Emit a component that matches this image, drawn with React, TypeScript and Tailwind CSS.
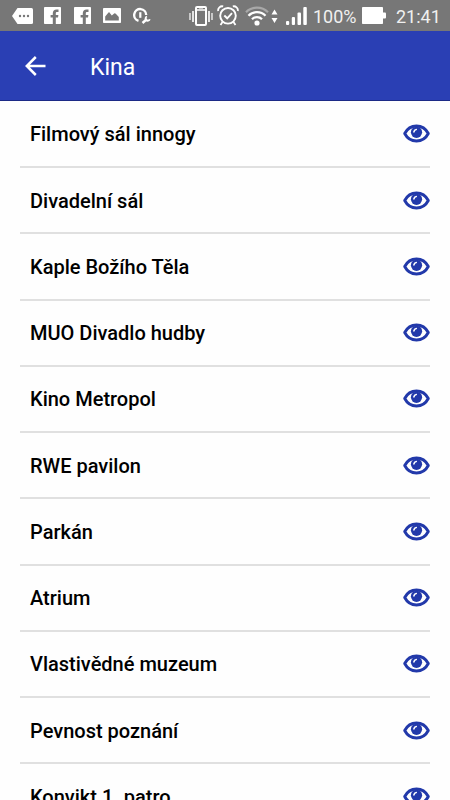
import React from "react";

const cinemas = [
  "Filmový sál innogy",
  "Divadelní sál",
  "Kaple Božího Těla",
  "MUO Divadlo hudby",
  "Kino Metropol",
  "RWE pavilon",
  "Parkán",
  "Atrium",
  "Vlastivědné muzeum",
  "Pevnost poznání",
  "Konvikt 1. patro",
];

function MessageIcon() {
  return (
    <svg width="21" height="16" viewBox="0 0 21 16" className="ml-3 shrink-0">
      <path d="M5.500 0H19.500a1.500 1.500 0 0 1 1.500 1.500V14.500a1.500 1.500 0 0 1-1.500 1.500H5.500L0 8Z" fill="#fff" />
      <circle cx="8" cy="8" r="1.200" fill="#777" />
      <circle cx="12" cy="8" r="1.200" fill="#777" />
      <circle cx="16" cy="8" r="1.200" fill="#777" />
    </svg>
  );
}

function FacebookIcon() {
  return (
    <svg width="17" height="17" viewBox="0 0 17 17" className="shrink-0">
      <rect width="17" height="17" rx="0.800" fill="#fff" />
      <path d="M8.800 17V10.600H6.600V8H8.800V6.300C8.800 3.800 10.200 2.400 12.600 2.400H14.500V5H13.200C12.200 5 11.800 5.500 11.800 6.300V8H14.400L14 10.600H11.800V17Z" fill="#777" />
    </svg>
  );
}

function PictureIcon() {
  return (
    <svg width="18" height="15" viewBox="0 0 18 15" className="ml-3 shrink-0">
      <rect width="18" height="15" rx="0.800" fill="#fff" />
      <path d="M2.200 12.500V8.500L5.500 4.500Q6.500 4 7 5.200L8.800 7.500L11.200 5.400Q12 5 12.800 5.700L15.800 9V12.500Z" fill="#777" />
    </svg>
  );
}

function GaugeIcon() {
  return (
    <svg width="18" height="18" viewBox="0 0 18 18" fill="none" stroke="#fff" className="ml-3 shrink-0">
      <path d="M5.500 13.800A6 6 0 1 1 13.200 8" strokeWidth="2.400" />
      <path d="M7.300 5.200V10.800" strokeWidth="2.200" />
      <path d="M9.500 16L14 12" strokeWidth="2.400" />
      <path d="M14 9.500A2.200 2.200 0 1 0 16.800 12.300" strokeWidth="1.800" />
    </svg>
  );
}

function VibrateIcon() {
  return (
    <svg width="24" height="20" viewBox="0 0 24 20" fill="none" stroke="#fff" className="shrink-0">
      <rect x="7" y="1" width="10" height="18" rx="1" strokeWidth="2" />
      <path d="M7 4H17M10 1.800H14M4 5V16M20 5V16" strokeWidth="1.600" />
      <path d="M1 7V14M23 7V14" strokeWidth="1.200" />
    </svg>
  );
}

function AlarmIcon() {
  return (
    <svg width="22" height="21" viewBox="0 0 22 21" fill="none" stroke="#fff" className="ml-[4px] shrink-0">
      <circle cx="11" cy="10.800" r="7.800" strokeWidth="1.900" />
      <path d="M7.300 10.500L10.200 13.300L15 8.200" strokeWidth="1.900" />
      <path d="M1.200 6A4 4 0 0 1 6.200 1.400M15.800 1.400A4 4 0 0 1 20.800 6M5.500 17L3.500 20M16.500 17L18.500 20" strokeWidth="1.800" />
    </svg>
  );
}

function WifiIcon() {
  return (
    <svg width="33" height="20" viewBox="0 0 33 20" fill="none" className="ml-[6px] mr-[1px] shrink-0">
      <path d="M1 6.200A15.500 15.500 0 0 1 23 6.200" stroke="#a8a8a8" strokeWidth="2.200" />
      <path d="M3.500 9.700A11.700 11.700 0 0 1 20.500 9.700M7 13.200A7 7 0 0 1 17 13.200" stroke="#fff" strokeWidth="2.300" />
      <circle cx="12" cy="17" r="2.600" fill="#fff" />
      <path d="M26.500 8.500L29.500 3.500L32.500 8.500ZM26.500 12L29.500 17L32.500 12Z" fill="#fff" />
    </svg>
  );
}

function SignalIcon() {
  return (
    <svg width="21" height="18" viewBox="0 0 21 18" fill="#fff" className="ml-[7px] shrink-0">
      <rect x="0" y="14" width="3.200" height="4" rx="1" />
      <rect x="5.800" y="10" width="3.200" height="8" rx="1" />
      <rect x="11.500" y="5.500" width="3.500" height="12.500" rx="1" />
      <rect x="17.300" y="0" width="3.500" height="18" rx="1" />
    </svg>
  );
}

function BatteryIcon() {
  return (
    <svg width="24" height="17" viewBox="0 0 24 17" fill="#fff" className="shrink-0">
      <rect width="21" height="17" rx="0.800" />
      <rect x="20" y="5.500" width="4" height="6" rx="1" />
    </svg>
  );
}

function EyeIcon() {
  return (
    <svg width="27" height="19" viewBox="0 0 27 19" fill="none" className="shrink-0">
      <path
        d="M1.700 9.500C4.200 4.700 8.500 2 13.500 2S22.800 4.700 25.300 9.500C22.800 14.300 18.500 17 13.500 17S4.200 14.300 1.700 9.500Z"
        stroke="#2239aa"
        strokeWidth="2.900"
        strokeLinejoin="round"
      />
      <circle cx="13.500" cy="8.300" r="5.600" fill="#2239aa" />
      <path d="M10.900 7.900A2.900 2.900 0 0 1 13.300 5.500" stroke="#fff" strokeWidth="1.600" strokeLinecap="round" />
    </svg>
  );
}

function StatusBar() {
  return (
    <div className="flex h-[31px] shrink-0 items-center bg-[#777777] text-white">
      <MessageIcon />
      <div className="ml-[11px] flex gap-[13px]">
        <FacebookIcon />
        <FacebookIcon />
      </div>
      <PictureIcon />
      <GaugeIcon />
      <div className="ml-auto flex items-center">
        <VibrateIcon />
        <AlarmIcon />
        <WifiIcon />
        <SignalIcon />
        <span className="ml-[6px] w-[49px] whitespace-nowrap pt-[2px] text-[18px] leading-none text-[#f0f0f0]">100%</span>
        <BatteryIcon />
        <span className="mr-[10px] ml-[10px] w-[44px] whitespace-nowrap pt-[2px] text-[18px] leading-none text-[#f0f0f0]">21:41</span>
      </div>
    </div>
  );
}

export default function App() {
  return (
    <div className="flex h-[800px] w-[450px] flex-col overflow-hidden bg-[#fefefe] font-['Roboto',sans-serif]">
      <StatusBar />

      {/* App bar */}
      <header className="flex h-[70px] shrink-0 items-center border-b border-[#1c2a86] bg-[#2a3fb4] pl-[25px] text-white">
        <button aria-label="Zpět">
          <svg width="21" height="20" viewBox="0 0 21 20" fill="none" stroke="#fff" strokeWidth="2.500">
            <path d="M20.500 10H2M10.800 1L1.800 10L10.800 19" />
          </svg>
        </button>
        <h1 className="ml-[44px] pt-[4px] text-[23px] leading-none">Kina</h1>
      </header>

      {/* Cinema list */}
      <ul className="px-5 pt-[0.750px]">
        {cinemas.map((name) => (
          <li key={name} className="flex h-[66.250px] items-center justify-between border-b-2 border-[#e0e0e0] pl-[10px]">
            <span className="pt-[1px] text-[20px] font-medium text-black">{name}</span>
            <EyeIcon />
          </li>
        ))}
      </ul>
    </div>
  );
}
